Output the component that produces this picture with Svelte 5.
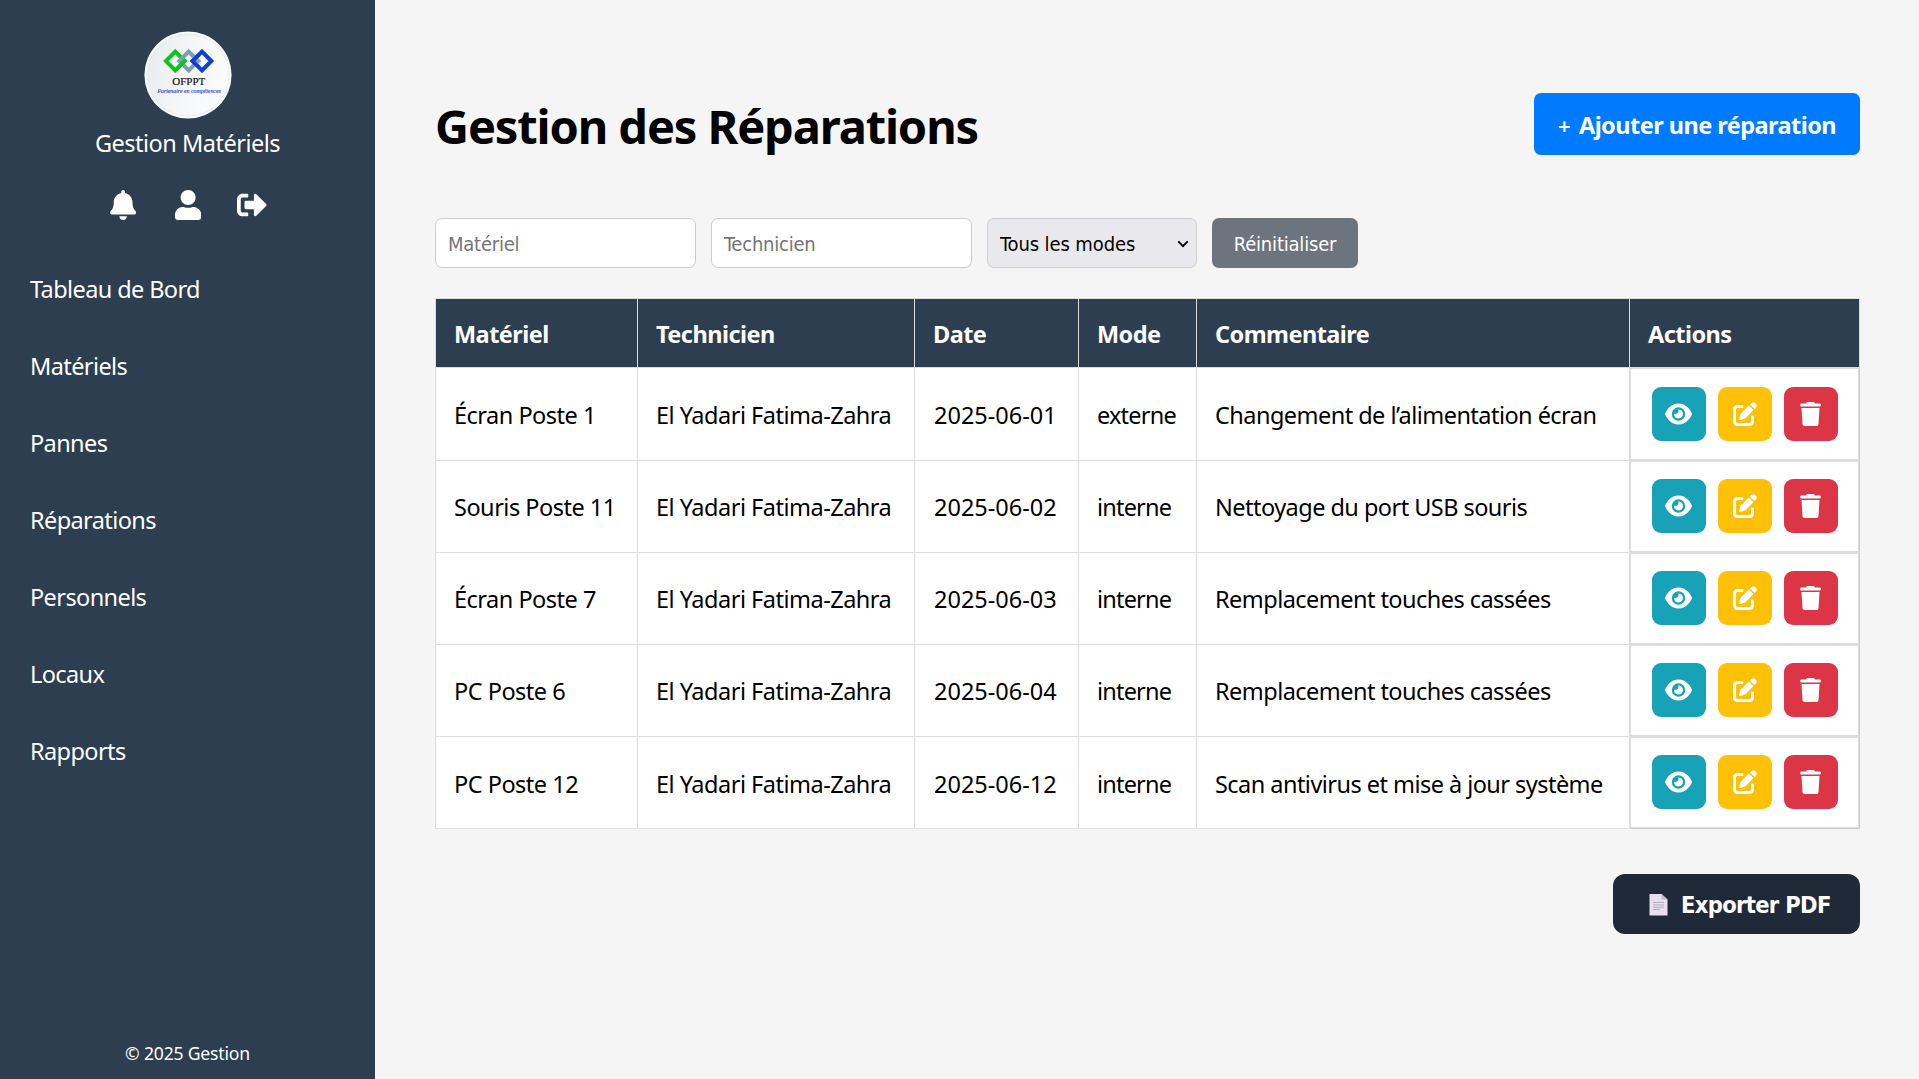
<script>
  const nav = ['Tableau de Bord', 'Matériels', 'Pannes', 'Réparations', 'Personnels', 'Locaux', 'Rapports'];
  const rows = [
    ['Écran Poste 1', 'El Yadari Fatima-Zahra', '2025-06-01', 'externe', 'Changement de l’alimentation écran'],
    ['Souris Poste 11', 'El Yadari Fatima-Zahra', '2025-06-02', 'interne', 'Nettoyage du port USB souris'],
    ['Écran Poste 7', 'El Yadari Fatima-Zahra', '2025-06-03', 'interne', 'Remplacement touches cassées'],
    ['PC Poste 6', 'El Yadari Fatima-Zahra', '2025-06-04', 'interne', 'Remplacement touches cassées'],
    ['PC Poste 12', 'El Yadari Fatima-Zahra', '2025-06-12', 'interne', 'Scan antivirus et mise à jour système'],
  ];
  const columns = ['name', 'tech', 'date', 'mode', 'comment'];
</script>

<div class="layout">
  <aside class="sidebar">
    <div class="brand">
      <svg class="logo" viewBox="0 0 88 88">
        <defs>
          <linearGradient id="disc" x1="0" y1="0" x2="1" y2="0.3">
            <stop offset="0" stop-color="#e6eaed" />
            <stop offset="0.6" stop-color="#f6f7f8" />
            <stop offset="1" stop-color="#fafbfb" />
          </linearGradient>
        </defs>
        <circle cx="44" cy="44" r="43.6" fill="#fbfcfc" />
        <circle cx="44" cy="44" r="41" fill="url(#disc)" stroke="#dfe6ea" stroke-width="0.8" />
        <g fill="none" stroke-width="4">
          <path d="M31.3 20.6 40.700 30 31.3 39.4 21.9 30z" stroke="#0cc41c" />
          <path d="M44.7 20.6 54.100 30 44.7 39.4 35.3 30z" stroke="#7d9db8" />
          <path d="M58 20.6 67.4 30 58 39.4 48.6 30z" stroke="#0d3fd0" />
          <path d="M42.100 28.600 35 35.700" stroke="#0cc41c" />
          <path d="M46.500 22.400 55.500 31.400" stroke="#7d9db8" />
          <path d="M47.200 31.400 54.200 24.400" stroke="#0d3fd0" />
        </g>
        <text x="28.3" y="54" font-size="11" fill="#111" stroke="#111" stroke-width="0.2" textLength="33" lengthAdjust="spacingAndGlyphs">OFPPT</text>
        <text x="13.4" y="61.6" font-size="5.8" font-style="italic" fill="#2a48dc" stroke="#2a48dc" stroke-width="0.15" textLength="63.4" lengthAdjust="spacingAndGlyphs">Partenaire en compétences</text>
      </svg>
      <div class="name">Gestion Matériels</div>
    </div>
    <div class="quick">
      <svg class="bell" viewBox="0 0 448 512"><path d="M224 512c35.32 0 63.97-28.65 63.97-64H160.03c0 35.35 28.65 64 63.97 64zm215.39-149.71c-19.32-20.76-55.47-51.99-55.47-154.29 0-77.7-54.48-139.9-127.94-155.16V32c0-17.67-14.32-32-31.98-32s-31.98 14.33-31.98 32v20.84C118.56 68.1 64.08 130.3 64.08 208c0 102.3-36.15 133.53-55.47 154.29-6 6.45-8.66 14.16-8.61 21.71.11 16.4 12.98 32 32.1 32h383.8c19.12 0 32-15.6 32.1-32 .05-7.55-2.61-15.27-8.61-21.71z" /></svg>
      <svg class="user" viewBox="0 0 448 512"><path d="M224 256c70.7 0 128-57.3 128-128S294.7 0 224 0 96 57.3 96 128s57.3 128 128 128zm89.6 32h-16.7c-22.2 10.2-46.9 16-72.9 16s-50.6-5.8-72.9-16h-16.7C60.2 288 0 348.2 0 422.4V464c0 26.5 21.5 48 48 48h352c26.5 0 48-21.5 48-48v-41.6c0-74.2-60.2-134.4-134.4-134.4z" /></svg>
      <svg class="exit" viewBox="0 0 512 512"><path d="M497 273L329 441c-15 15-41 4.500-41-17v-96H152c-13.300 0-24-10.700-24-24v-96c0-13.300 10.700-24 24-24h136V88c0-21.400 25.900-32 41-17l168 168c9.300 9.400 9.300 24.600 0 34zM192 436v-40c0-6.600-5.400-12-12-12H96c-17.700 0-32-14.300-32-32V160c0-17.700 14.300-32 32-32h84c6.600 0 12-5.400 12-12V76c0-6.600-5.400-12-12-12H96c-53 0-96 43-96 96v192c0 53 43 96 96 96h84c6.600 0 12-5.400 12-12z" /></svg>
    </div>
    <nav>
      {#each nav as item}<a href="#top">{item}</a>{/each}
    </nav>
    <footer>© 2025 Gestion</footer>
  </aside>

  <main>
    <header>
      <h1>Gestion des Réparations</h1>
      <button class="add"><span class="plus">+</span>Ajouter une réparation</button>
    </header>

    <div class="filters">
      <input placeholder="Matériel" />
      <input placeholder="Technicien" />
      <div class="select">
        <select><option>Tous les modes</option></select>
        <svg viewBox="0 0 12 8"><path d="M1.300 1.300 6 6.200 10.700 1.300" /></svg>
      </div>
      <button class="reset">Réinitialiser</button>
    </div>

    <table>
      <colgroup>
        <col class="c1" /><col class="c2" /><col class="c3" /><col class="c4" /><col class="c5" /><col class="c6" />
      </colgroup>
      <thead>
        <tr><th>Matériel</th><th>Technicien</th><th>Date</th><th>Mode</th><th>Commentaire</th><th>Actions</th></tr>
      </thead>
      <tbody>
        {#each rows as row}
          <tr>
            {#each row as cell, i}<td class={columns[i]}>{cell}</td>{/each}
            <td class="actions">
              <div class="buttons">
                <button class="view" aria-label="Voir"><svg viewBox="0 0 576 512"><path d="M288 32c-80.800 0-145.500 36.800-192.600 80.600C48.600 156 17.300 208 2.500 243.700c-3.300 7.900-3.300 16.700 0 24.600C17.300 304 48.600 356 95.400 399.400C142.500 443.200 207.200 480 288 480s145.500-36.800 192.600-80.600c46.800-43.500 78.100-95.400 93-131.100c3.300-7.900 3.300-16.700 0-24.600c-14.900-35.700-46.200-87.700-93-131.100C433.500 68.800 368.800 32 288 32zM144 256a144 144 0 1 1 288 0 144 144 0 1 1 -288 0zm144-64c0 35.300-28.700 64-64 64c-7.100 0-13.900-1.200-20.300-3.300c-5.500-1.800-11.900 1.600-11.700 7.400c.3 6.900 1.300 13.800 3.200 20.700c13.700 51.200 66.400 81.600 117.600 67.900s81.600-66.400 67.900-117.600c-11.100-41.500-47.800-69.400-88.600-71.100c-5.800-.2-9.200 6.100-7.400 11.700c2.100 6.400 3.300 13.200 3.300 20.300z" /></svg></button>
                <button class="edit" aria-label="Modifier"><svg viewBox="0 0 512 512"><path d="M471.600 21.700c-21.900-21.900-57.300-21.900-79.200 0L362.300 51.700l97.900 97.900 30.100-30.100c21.900-21.900 21.900-57.300 0-79.200L471.600 21.700zm-299.200 220c-6.100 6.100-10.800 13.600-13.500 21.900l-29.600 88.800c-2.900 8.600-.6 18.100 5.800 24.600s15.900 8.700 24.600 5.800l88.800-29.600c8.200-2.700 15.700-7.400 21.900-13.500L437.700 172.300 339.700 74.300 172.400 241.700zM96 64C43 64 0 107 0 160V416c0 53 43 96 96 96H352c53 0 96-43 96-96V320c0-17.700-14.300-32-32-32s-32 14.300-32 32v96c0 17.700-14.300 32-32 32H96c-17.700 0-32-14.300-32-32V160c0-17.700 14.300-32 32-32h96c17.700 0 32-14.300 32-32s-14.300-32-32-32H96z" /></svg></button>
                <button class="remove" aria-label="Supprimer"><svg viewBox="0 0 448 512"><path d="M135.200 17.700L128 32H32C14.300 32 0 46.300 0 64S14.300 96 32 96H416c17.700 0 32-14.300 32-32s-14.300-32-32-32H320l-7.200-14.300C307.400 6.800 296.300 0 284.200 0H163.800c-12.100 0-23.200 6.800-28.600 17.700zM416 128H32L53.200 467c1.600 25.300 22.600 45 47.900 45H346.900c25.300 0 46.300-19.700 47.900-45L416 128z" /></svg></button>
              </div>
            </td>
          </tr>
        {/each}
      </tbody>
    </table>

    <div class="export-row">
      <button class="export">
        <svg viewBox="0 0 19 22">
          <path d="M0.500 0h12l6 5.500V21.500h-18z" fill="#e9dff1" />
          <path d="M12.500 0l6 5.500h-6z" fill="#c3b9cb" />
          <path d="M4 8.500h11M4 11h11M4 13.300h11M4 15.500h7" stroke="#b5aabd" stroke-width="1" />
        </svg>
        Exporter PDF
      </button>
    </div>
  </main>
</div>

<style>
  :global(body) { margin: 0; }
  .layout {
    display: flex;
    height: 1079px;
    background: #f5f5f5;
    font-family: "Noto Sans", sans-serif;
    font-size: 23.5px;
    letter-spacing: -0.5px;
    color: #000;
  }
  button { border: 0; font-family: inherit; letter-spacing: inherit; color: #fff; padding: 0; }

  .sidebar {
    box-sizing: border-box;
    width: 375px;
    flex: none;
    padding: 31px 0 0;
    background: #2c3e50;
    color: #fff;
    display: flex;
    flex-direction: column;
  }
  .brand { display: flex; flex-direction: column; align-items: center; }
  .logo { width: 88px; height: 88px; font-family: "Liberation Serif", serif; letter-spacing: 0; }
  .name { line-height: 36px; margin-top: 6px; }
  .quick { display: flex; height: 30px; margin: 29px 0 0 110px; fill: #fff; }
  .bell, .user { width: 26.25px; height: 30px; }
  .user { margin: 0 35.5px 0 38.7px; }
  .exit { width: 30px; height: 30px; }
  nav { display: flex; flex-direction: column; margin-top: 31px; }
  nav a { padding: 20px 30px; line-height: 37px; color: #fff; text-decoration: none; letter-spacing: -0.6px; }
  footer { margin-top: auto; padding-bottom: 13px; line-height: 26px; text-align: center; font-size: 17.6px; letter-spacing: -0.2px; }

  main { flex: 1; padding: 93px 59px 0 60px; }
  header { display: flex; justify-content: space-between; height: 62px; }
  h1 { margin: 0; font-size: 47px; line-height: 66px; letter-spacing: -1.12px; font-weight: 700; }
  .add { width: 326px; border-radius: 7px; background: #007bff; font-size: 23.5px; font-weight: 700; padding-top: 2px; letter-spacing: -0.54px; }
  .plus { font-weight: 600; font-size: 22px; margin-right: 9px; }

  .filters { display: flex; gap: 15px; height: 50px; margin-top: 63px; font-family: "DejaVu Sans Condensed", "DejaVu Sans", sans-serif; letter-spacing: -0.2px; }
  input, select {
    box-sizing: border-box;
    height: 50px;
    border: 1px solid #ccc;
    border-radius: 7px;
    font: 20px "DejaVu Sans Condensed", "DejaVu Sans", sans-serif;
    font-stretch: condensed;
    letter-spacing: -0.1px;
    padding: 2px 12px 0;
  }
  input { width: 261px; background: #fff; }
  input::placeholder { color: #757575; opacity: 1; letter-spacing: -0.22px; }
  .select { position: relative; width: 210px; }
  select { appearance: none; width: 100%; background: #e9e9ed; color: #000; }
  .select svg { position: absolute; right: 8px; top: 22px; width: 12px; height: 8px; fill: none; stroke: #000; stroke-width: 1.9; }
  .reset { width: 146px; border-radius: 7px; background: #6c757d; font-size: 20px; padding-top: 2px; font-stretch: condensed; }

  table { width: 1425px; margin-top: 30px; table-layout: fixed; border-collapse: separate; border-spacing: 0; border: solid #ddd; border-width: 1px 0 0 1px; background: #fff; }
  .c1 { width: 202px; }
  .c2 { width: 277px; }
  .c3 { width: 164px; }
  .c4 { width: 118px; }
  .c5 { width: 433px; }
  .c6 { width: 230px; }
  th, td { box-sizing: border-box; border: solid #ddd; border-width: 0 1px 1px 0; text-align: left; padding: 2px 0 0 18px; white-space: nowrap; }
  th { height: 69px; background: #2c3e50; color: #fff; font-weight: 700; letter-spacing: -0.54px; }
  td { height: 92px; padding-top: 0; }
  tbody tr:first-child td { height: 93px; padding-top: 2px; }
  tbody tr:last-child td { padding-top: 2px; }
  .date { letter-spacing: 0; padding-left: 19px; }
  .mode { letter-spacing: -0.8px; }
  .comment { letter-spacing: -0.54px; }
  .actions { border-right-color: #ccc; box-shadow: inset 0 0 0 1px #ddd; }
  tbody tr .actions, tbody tr:last-child .actions { padding: 0 0 2px 22px; }
  tbody tr:first-child .actions { padding: 0 0 0 22px; }
  tbody tr:last-child .actions { border-bottom-color: #ccc; }
  .buttons { display: flex; gap: 12px; }
  .buttons button { width: 54px; height: 54px; border-radius: 9px; display: flex; align-items: center; justify-content: center; }
  .buttons svg { height: 24px; fill: #fff; margin-right: 1px; }
  .view { background: #17a2b8; }
  .edit { background: #ffc107; }
  .remove { background: #dc3545; }

  .export-row { display: flex; justify-content: flex-end; margin-top: 45px; }
  .export {
    display: flex;
    align-items: center;
    gap: 13px;
    width: 247px;
    height: 60px;
    padding: 1px 0 0 36px;
    border-radius: 12px;
    background: #1f2937;
    font: 700 23.5px "DejaVu Sans Condensed", "DejaVu Sans", sans-serif;
    font-stretch: condensed;
    letter-spacing: -0.68px;
    white-space: nowrap;
  }
  .export svg { width: 19px; height: 22px; flex: none; }
</style>
